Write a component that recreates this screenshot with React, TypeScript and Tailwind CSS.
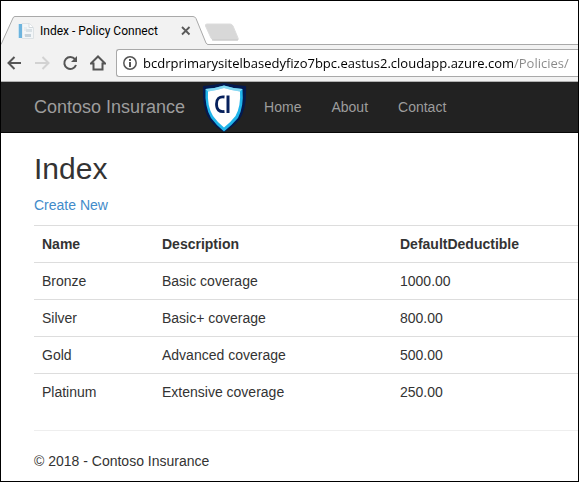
import React from "react";

interface Policy {
  name: string;
  description: string;
  deductible: string;
}

const policies: Policy[] = [
  { name: "Bronze", description: "Basic coverage", deductible: "1000.00" },
  { name: "Silver", description: "Basic+ coverage", deductible: "800.00" },
  { name: "Gold", description: "Advanced coverage", deductible: "500.00" },
  { name: "Platinum", description: "Extensive coverage", deductible: "250.00" },
];

function PageIcon() {
  return (
    <svg width="16" height="16" viewBox="0 0 16 16" className="shrink-0" aria-hidden="true">
      <path d="M4 .5h7.500l4 4v11H4z" fill="#f3f6f8" stroke="#dde2e5" />
      <path d="M11 .5v4h4" fill="#fff" stroke="#d3d9dd" />
      <path d="M6 5h3M6 7h2M6 12h1" stroke="#dde2e5" />
      <rect x="8" y="6" width="6" height="3" fill="#d9e1e6" />
      <rect x="7" y="11" width="6" height="3" fill="#c6d2da" />
      <rect x="1" y="1" width="3" height="14" fill="#6db4de" />
      <path d="M.5 1v14" stroke="#c9e3f2" />
    </svg>
  );
}

function TabStrip() {
  return (
    <div className="flex h-[44px] items-end">
      <div className="relative flex h-[29px] w-[207px] shrink-0 items-center">
        <svg width="207" height="29" viewBox="0 0 207 29" className="absolute inset-0" aria-hidden="true">
          <path d="M0 29V28.500L12 2Q12.500 .5 14 .5H192Q194 .5 195 2.500L205 27Q206 28.500 207 28.500V29Z" fill="#f2f2f2" />
          <path d="M0 28.500L12 2Q12.500 .5 14 .5H192Q194 .5 195 2.500L205 27Q206 28.500 207 28.500" fill="none" stroke="#a9a9a9" />
        </svg>
        <div className="relative flex w-full items-center pl-[17px] pr-4">
          <PageIcon />
          <span className="ml-1.5 grow whitespace-nowrap font-[Roboto,'Open_Sans',sans-serif] text-[12px] leading-4 text-black">
            Index - Policy Connect
          </span>
          <button type="button" aria-label="Close tab" className="flex size-3 items-center justify-center">
            <svg width="10" height="10" viewBox="0 0 10 10" aria-hidden="true">
              <path d="M1 1l7.500 7.500M8.500 1l-7.500 7.500" stroke="#5a5a5a" strokeWidth="1.800" />
            </svg>
          </button>
        </div>
      </div>
      <div className="h-[29px] grow border-b border-[#a9a9a9] pt-[7px]">
        <button type="button" aria-label="New tab" className="-ml-1 block">
          <svg width="36" height="18" viewBox="0 0 36 18" aria-hidden="true">
            <path d="M3 1H26Q28 1 29 3L34 15Q35 17 33 17H10Q8 17 7 15L1.500 3Q1 1 3 1Z" fill="#d8d8d8" stroke="#dcdcdc" />
            <path d="M8 17H34" stroke="#c4c4c4" />
          </svg>
        </button>
      </div>
    </div>
  );
}

function Toolbar() {
  return (
    <div className="flex h-[37px] items-center border-b border-[#b1b1b1] bg-[#f2f2f2] pl-[5px]">
      <div className="flex shrink-0 items-center gap-3">
        <button type="button" aria-label="Back">
          <svg width="16" height="16" viewBox="0 0 16 16" fill="none" stroke="#555" strokeWidth="2" aria-hidden="true">
            <path d="M15 8H3M8.500 2L2.500 8 8.500 14" />
          </svg>
        </button>
        <button type="button" aria-label="Forward">
          <svg width="16" height="16" viewBox="0 0 16 16" fill="none" stroke="#d2d2d2" strokeWidth="2" aria-hidden="true">
            <path d="M1 8h13M8.500 2L14.500 8 8.500 14" />
          </svg>
        </button>
        <button type="button" aria-label="Reload">
          <svg width="16" height="16" viewBox="0 0 16 16" aria-hidden="true">
            <path d="M13 4.200A6 6 0 1 0 14 10" fill="none" stroke="#555" strokeWidth="2" />
            <path d="M15 1v6H9z" fill="#555" />
          </svg>
        </button>
        <button type="button" aria-label="Home page">
          <svg width="16" height="16" viewBox="0 0 16 16" fill="none" stroke="#555" strokeWidth="2" aria-hidden="true">
            <path d="M.8 8.500H3.500V14.500H12.500V8.500H15.200L8 1.500Z" />
          </svg>
        </button>
      </div>
      <div className="ml-2.5 flex h-7 min-w-0 grow items-center rounded-l-[3px] border border-r-0 border-[#a9a9a9] bg-white pl-1.5">
        <svg width="14" height="14" viewBox="0 0 14 14" className="shrink-0" aria-hidden="true">
          <circle cx="7" cy="7" r="6.200" fill="none" stroke="#555" strokeWidth="1.500" />
          <path d="M7 3v2M7 6v5" stroke="#555" strokeWidth="2" />
        </svg>
        <input
          type="text"
          aria-label="Address"
          defaultValue="bcdrprimarysitelbasedyfizo7bpc.eastus2.cloudapp.azure.com/Policies/"
          className="ml-1.5 h-5 min-w-0 grow bg-[linear-gradient(to_right,#000_371px,#888_371px)] bg-clip-text font-['Open_Sans','Noto_Sans',sans-serif] text-[13px] text-transparent outline-none"
        />
      </div>
    </div>
  );
}

function ShieldLogo() {
  return (
    <svg width="44" height="50" viewBox="0 0 44 50" className="shrink-0" aria-label="Contoso Insurance logo" role="img">
      <path d="M0 4Q11 3 21 1Q31 3 43 4Q44 28 36 38Q29 46 21 50Q13 46 7 38Q-1 28 0 4Z" fill="#04194e" />
      <path d="M2.500 7Q12 6.500 21 3.500Q30 6.500 39.500 7Q41 25 35 36Q29 43 21 49.500Q13 43 8 36Q1.500 25 2.500 7Z" fill="#20b4ea" />
      <path d="M2.500 7Q12 6.500 21 3.500Q30 6.500 39.500 7L37 9.500Q29 8.500 21 6Q13 8.500 5 9.500Z" fill="#86d9f2" />
      <path d="M5 9.500Q13 8.500 21 6Q29 8.500 37 9.500Q38 24 32.500 34Q27 41 21 45.500Q15 41 10 34Q4 24 5 9.500Z" fill="#fff" />
      <path d="M21.500 15Q13.500 14 13.500 22Q13.500 30.500 21.500 29.500" fill="none" stroke="#06205c" strokeWidth="2.800" />
      <path d="M25 13.500V31" stroke="#06205c" strokeWidth="3" />
    </svg>
  );
}

function NavBar() {
  return (
    <nav className="flex h-[51px] items-center border-b border-[#080808] bg-[#222] pl-[33px] text-[#9d9d9d]">
      <a href="#home" className="whitespace-nowrap text-[18px] leading-5">
        Contoso Insurance
      </a>
      <div className="ml-[18px] flex items-center">
        <ShieldLogo />
        <ul className="flex pl-0.5">
          {["Home", "About", "Contact"].map((label) => (
            <li key={label}>
              <a href={`#${label.toLowerCase()}`} className="block px-[15px] py-[15px]">
                {label}
              </a>
            </li>
          ))}
        </ul>
      </div>
    </nav>
  );
}

export default function App() {
  return (
    <div className="overflow-hidden border border-black bg-white font-['Liberation_Sans',Arial,sans-serif] text-[14px] leading-5 text-[#333]">
      <header>
        <TabStrip />
        <Toolbar />
      </header>
      <NavBar />
      <main className="pl-[33px] pt-[19px]">
        <h2 className="mb-2.5 text-[30px] leading-[33px]">Index</h2>
        <p className="mb-2.5">
          <a href="#create" className="text-[#428bca]">
            Create New
          </a>
        </p>
        <table className="mb-5 w-full table-fixed border-collapse text-left">
          <thead>
            <tr className="border-t border-[#ddd]">
              <th className="w-[120px] p-2 font-bold">Name</th>
              <th className="w-[238px] p-2 font-bold">Description</th>
              <th className="p-2 font-bold">DefaultDeductible</th>
            </tr>
          </thead>
          <tbody>
            {policies.map((policy) => (
              <tr key={policy.name} className="border-t border-[#ddd]">
                <td className="p-2">{policy.name}</td>
                <td className="p-2">{policy.description}</td>
                <td className="p-2">{policy.deductible}</td>
              </tr>
            ))}
          </tbody>
        </table>
        <footer className="border-t border-[#eee] pb-2.5 pt-5">
          <p>© 2018 - Contoso Insurance</p>
        </footer>
      </main>
    </div>
  );
}
